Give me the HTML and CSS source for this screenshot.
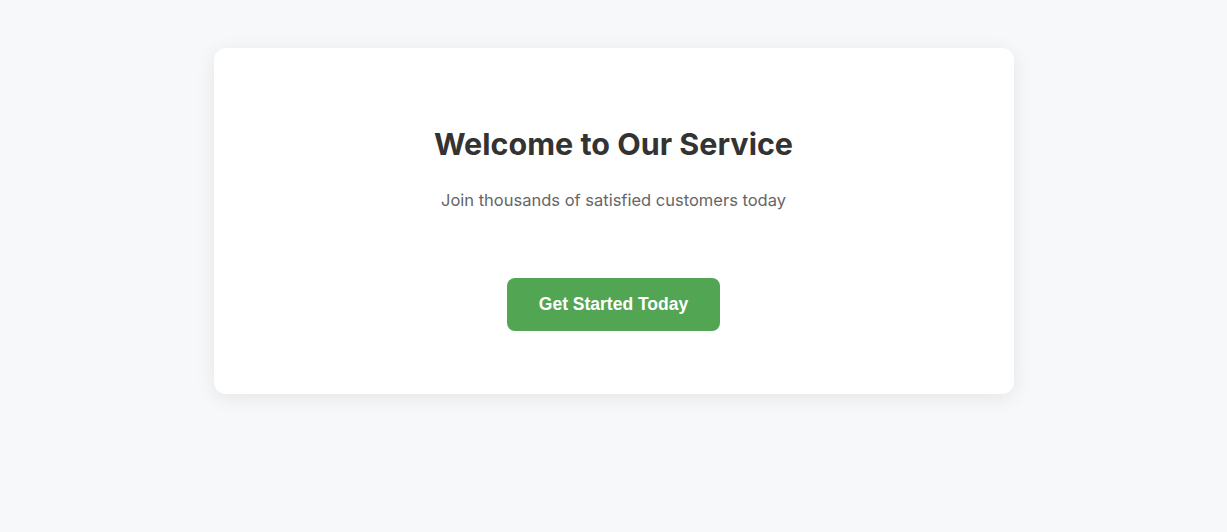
FILE: index.html
```html
<!DOCTYPE html>
<html lang="en">
<head>
<meta charset="utf-8">
<title>Welcome</title>
<link rel="stylesheet" href="styles.css">
</head>
<body>
<main class="page">
  <section class="card">
    <h1 class="title">Welcome to Our Service</h1>
    <p class="subtitle">Join thousands of satisfied customers today</p>
    <div class="actions">
      <button class="cta" type="button">Get Started Today</button>
    </div>
  </section>
</main>
</body>
</html>
```

FILE: styles.css
```css
html, body {
  margin: 0;
  padding: 0;
}
body {
  background: #f7f8fa;
  font-family: Inter, "Noto Sans", sans-serif;
  color: #333;
}
.page {
  padding: 48px 20px;
}
.card {
  max-width: 800px;
  margin: 0 auto;
  box-sizing: border-box;
  background: #fff;
  border-radius: 12px;
  box-shadow: 0 4px 20px rgba(0, 0, 0, 0.08);
  padding: 78px 40px 63px;
  text-align: center;
}
.title {
  margin: 0;
  font-size: 30.5px;
  font-weight: 700;
  line-height: 36px;
  color: #333;
}
.subtitle {
  margin: 26px 0 0;
  font-size: 16.5px;
  line-height: 25px;
  color: #666;
}
.actions {
  margin-top: 65px;
  display: flex;
  justify-content: center;
}
.cta {
  font-family: "Liberation Sans", Arial, sans-serif;
  font-size: 17.5px;
  line-height: 19px;
  font-weight: 700;
  color: #fff;
  background: #52a552;
  border: none;
  border-radius: 8px;
  padding: 17px 32px;
  cursor: pointer;
}
```
